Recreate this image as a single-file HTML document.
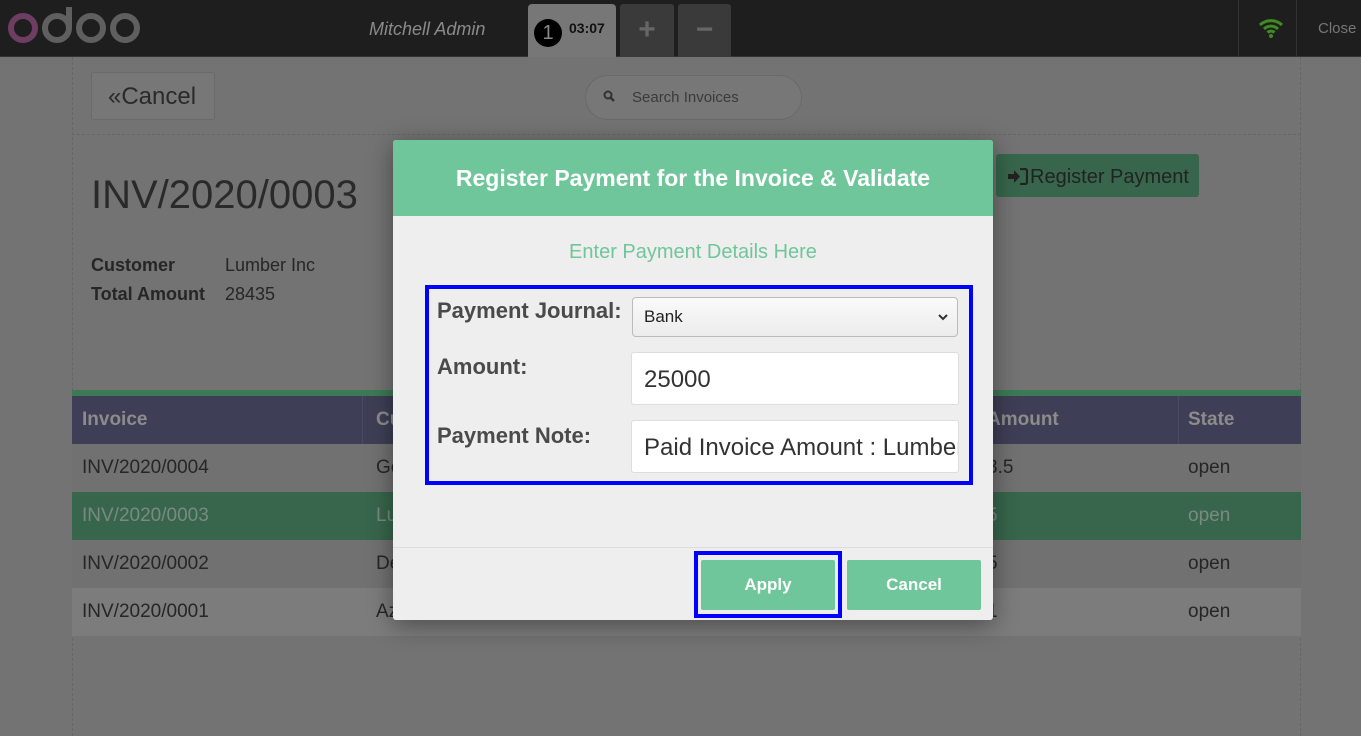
<!DOCTYPE html>
<html><head><meta charset="utf-8"><style>
*{box-sizing:border-box;margin:0;padding:0}
body{width:1361px;height:736px;overflow:hidden;background:#737373;font-family:"Liberation Sans",sans-serif;position:relative;color:#262626}
.a{position:absolute}
.hdr{left:0;top:0;width:1361px;height:57px;background:#1e1e1e;border-bottom:1px solid #333}
.panel{left:72px;top:57px;width:1229px;height:679px;border-left:1px dashed #666;border-right:1px dashed #666}
.row{left:72px;width:1229px;height:48px;font-size:19px;line-height:48px}
.row span{position:absolute}
.modal{left:393px;top:140px;width:600px;height:480px;background:#efeeee;border-radius:3px;box-shadow:0 5px 25px rgba(0,0,0,.4);overflow:hidden}
.lbl{font-weight:bold;font-size:22px;color:#4a4a4a}
.inp{background:#fff;border:1px solid #ddd;border-radius:3px;font-size:24px;color:#333;padding-left:12px}
.btn{background:#6fc69a;color:#fff;font-weight:bold;font-size:17px;text-align:center;line-height:50px;border-radius:2px}
</style></head><body>
<div class="a hdr"></div>
<svg class="a" style="left:0;top:0" width="150" height="50" viewBox="0 0 150 50">
<circle cx="23" cy="28" r="12" fill="none" stroke="#6d3d62" stroke-width="6"/>
<circle cx="57" cy="28" r="12" fill="none" stroke="#5f5f5f" stroke-width="6"/>
<rect x="66" y="7" width="6" height="21" fill="#5f5f5f"/>
<circle cx="91" cy="28" r="12" fill="none" stroke="#5f5f5f" stroke-width="6"/>
<circle cx="125" cy="28" r="12" fill="none" stroke="#5f5f5f" stroke-width="6"/>
</svg>
<div class="a" style="left:369px;top:19px;font-size:18px;font-style:italic;color:#8a8a8a">Mitchell Admin</div>
<div class="a" style="left:528px;top:4px;width:88px;height:53px;background:#777;border-radius:4px 4px 0 0"></div>
<div class="a" style="left:534px;top:19px;width:28px;height:28px;border-radius:50%;background:#000;color:#888;font-size:20px;text-align:center;line-height:28px">1</div>
<div class="a" style="left:569px;top:20px;font-size:14px;font-weight:bold;color:#111">03:07</div>
<div class="a" style="left:620px;top:4px;width:54px;height:53px;background:#3a3a3a;border-radius:3px 3px 0 0;color:#666;font-size:30px;text-align:center;line-height:52px;font-weight:bold">+</div>
<div class="a" style="left:678px;top:4px;width:53px;height:53px;background:#3a3a3a;border-radius:3px 3px 0 0;color:#666;font-size:30px;text-align:center;line-height:52px;font-weight:bold">−</div>
<div class="a" style="left:1238px;top:0;width:1px;height:57px;background:#333"></div>
<div class="a" style="left:1296px;top:0;width:1px;height:57px;background:#333"></div>
<svg class="a" style="left:1258px;top:18px" width="26" height="20" viewBox="0 0 26 20"><path d="M2 7a16 16 0 0 1 22 0M6 11a10 10 0 0 1 14 0M9.5 14.5a5 5 0 0 1 7 0" fill="none" stroke="#3f8a22" stroke-width="3"/><circle cx="13" cy="18" r="2" fill="#3f8a22"/></svg>
<div class="a" style="left:1318px;top:20px;font-size:15px;color:#777">Close</div>

<div class="a panel"></div>
<div class="a" style="left:72px;top:134px;width:1229px;border-top:1px dashed #666"></div>
<div class="a" style="left:91px;top:72px;width:124px;height:48px;border:1px solid #6a6a6a;background:#777;border-radius:3px;font-size:24px;line-height:48px;padding-left:16px;color:#2a2a2a">«Cancel</div>
<div class="a" style="left:585px;top:75px;width:217px;height:45px;border:1px solid #6a6a6a;border-radius:23px;background:#777;font-size:15px;line-height:43px;padding-left:46px;color:#3a3a3a">Search Invoices</div>
<svg class="a" style="left:603px;top:90px" width="12" height="12" viewBox="0 0 12 12"><circle cx="5" cy="5" r="3.5" fill="none" stroke="#333" stroke-width="2"/><path d="M7.5 7.5l3.5 3.5" stroke="#333" stroke-width="2.5"/></svg>
<div class="a" style="left:91px;top:173px;font-size:40px;color:#2a2a2a">INV/2020/0003</div>
<div class="a" style="left:91px;top:251px;font-size:18px;font-weight:bold;line-height:29px">Customer<br>Total Amount</div>
<div class="a" style="left:225px;top:251px;font-size:18px;line-height:29px">Lumber Inc<br>28435</div>
<div class="a" style="left:996px;top:154px;width:203px;height:43px;background:#37664c;border-radius:3px;font-size:20px;line-height:46px;padding-left:34px;color:#222">Register Payment</div>
<svg class="a" style="left:1008px;top:168px" width="20" height="17" viewBox="0 0 20 17"><path d="M0 6h6V2l6 6.5-6 6.5v-4H0z" fill="#222"/><path d="M12 1h5a2 2 0 0 1 2 2v11a2 2 0 0 1-2 2h-5" fill="none" stroke="#222" stroke-width="2.2"/></svg>

<div class="a" style="left:72px;top:390px;width:1229px;height:6px;background:#3c7a55"></div>
<div class="a row" style="top:396px;background:#3e3e56;color:#8c8c8c;font-weight:bold"><span style="left:10px">Invoice</span><span style="left:304px">Cu</span><span style="left:915px">Amount</span><span style="left:1116px">State</span><span style="left:290px;top:0;height:48px;border-left:1px solid #4a4a62"></span><span style="left:1106px;top:0;height:48px;border-left:1px solid #4a4a62"></span></div>
<div class="a row" style="top:444px;background:#717171"><span style="left:10px">INV/2020/0004</span><span style="left:304px">Ge</span><span style="left:915px">3.5</span><span style="left:1116px">open</span></div>
<div class="a row" style="top:492px;background:#37664c;color:#7a8a80"><span style="left:10px">INV/2020/0003</span><span style="left:304px">Lu</span><span style="left:915px">5</span><span style="left:1116px">open</span></div>
<div class="a row" style="top:540px;background:#717171"><span style="left:10px">INV/2020/0002</span><span style="left:304px">De</span><span style="left:915px">5</span><span style="left:1116px">open</span></div>
<div class="a row" style="top:588px;background:#7c7c7c"><span style="left:10px">INV/2020/0001</span><span style="left:304px">Az</span><span style="left:915px">1</span><span style="left:1116px">open</span></div>

<div class="a modal">
<div class="a" style="left:0;top:0;width:600px;height:76px;background:#6fc69a;color:#fff;font-weight:bold;font-size:23px;text-align:center;line-height:76px">Register Payment for the Invoice &amp; Validate</div>
<div class="a" style="left:0;top:101px;width:600px;text-align:center;font-size:20px;color:#6fc69a">Enter Payment Details Here</div>
<div class="a" style="left:32px;top:145px;width:548px;height:200px;border:4px solid #0000ff"></div>
<div class="a lbl" style="left:44px;top:158px">Payment Journal:</div>
<div class="a lbl" style="left:44px;top:214px">Amount:</div>
<div class="a lbl" style="left:44px;top:283px">Payment Note:</div>
<div class="a" style="left:239px;top:157px;width:326px;height:40px;border:1px solid #bbb;border-radius:4px;background:linear-gradient(#fafafa,#ececec);font-size:17px;line-height:38px;padding-left:11px;color:#222">Bank<svg style="position:absolute;right:9px;top:15px" width="10" height="8" viewBox="0 0 10 8"><path d="M1 2l4 4 4-4" fill="none" stroke="#333" stroke-width="2"/></svg></div>
<div class="a inp" style="left:238px;top:212px;width:328px;height:53px;line-height:53px">25000</div>
<div class="a inp" style="left:238px;top:280px;width:328px;height:53px;line-height:53px;overflow:hidden;white-space:nowrap">Paid Invoice Amount : Lumber Inc</div>
<div class="a" style="left:0;top:407px;width:600px;border-top:1px solid #ddd"></div>
<div class="a" style="left:301px;top:411px;width:148px;height:67px;border:4px solid #0000ff"></div>
<div class="a btn" style="left:308px;top:420px;width:134px">Apply</div>
<div class="a btn" style="left:454px;top:420px;width:134px">Cancel</div>
</div>
</body></html>
